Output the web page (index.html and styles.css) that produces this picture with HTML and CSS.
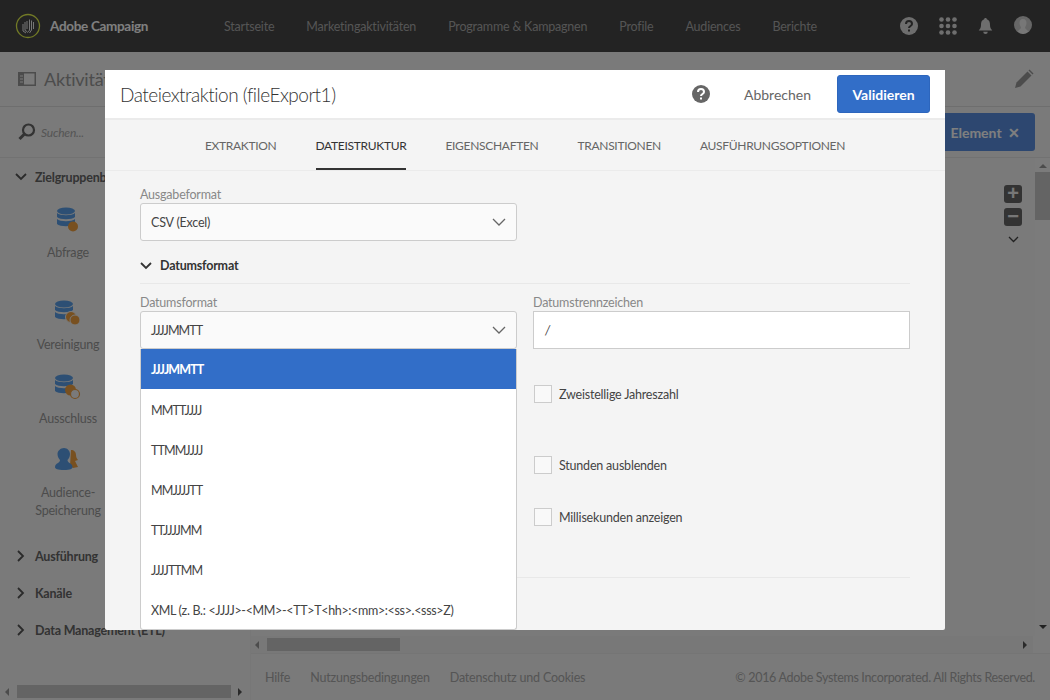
FILE: index.html
```html
<!DOCTYPE html>
<html lang="de">
<head>
<meta charset="utf-8">
<title>Adobe Campaign</title>
<link rel="stylesheet" href="styles.css">
</head>
<body>
<div class="app">
  <header class="topbar">
    <div class="brand">
      <svg class="logo" width="26" height="26" viewBox="0 0 26 26"><circle cx="13" cy="13" r="11.500" fill="none" stroke="#e4f44c" stroke-width="1.300"/><path d="M8 11v7l3 2M10 9v8.500l2 1M12 8v8M14.500 6.500v10.500c-.5 1.500-1.500 2-2.500 2.500M16.500 7.500v9.500l-2 3M18.500 9v7" fill="none" stroke="#eee" stroke-width="1"/></svg>
      <span class="brand-name">Adobe Campaign</span>
    </div>
    <nav class="nav">
      <span>Startseite</span><span>Marketingaktivitäten</span><span>Programme &amp; Kampagnen</span><span>Profile</span><span>Audiences</span><span>Berichte</span>
    </nav>
    <div class="top-icons">
      <svg width="18" height="18" viewBox="0 0 18 18"><circle cx="9" cy="9" r="9" fill="#ddd"/><path d="M6 7c0-4 6-4 6 0 0 2-3 2-3 4" fill="none" stroke="#464646" stroke-width="2"/><rect x="8" y="12.500" width="2" height="2" fill="#464646"/></svg>
      <svg width="18" height="18" viewBox="0 0 18 18" fill="#ddd"><circle cx="2.500" cy="2.500" r="2.300"/><circle cx="9" cy="2.500" r="2.300"/><circle cx="15.500" cy="2.500" r="2.300"/><circle cx="2.500" cy="9" r="2.300"/><circle cx="9" cy="9" r="2.300"/><circle cx="15.500" cy="9" r="2.300"/><circle cx="2.500" cy="15.500" r="2.300"/><circle cx="9" cy="15.500" r="2.300"/><circle cx="15.500" cy="15.500" r="2.300"/></svg>
      <svg width="15" height="18" viewBox="0 0 16 20" fill="#ddd"><path d="M8 1c-1 0-1.500.7-1.500 1.500C3.500 3.500 3 6 3 9c0 3-1 4.500-2.500 6h15C14 13.500 13 12 13 9c0-3-.5-5.500-3.500-6.500C9.500 1.700 9 1 8 1z"/><path d="M5.500 16.500a2.500 2.500 0 0 0 5 0z"/></svg>
      <svg class="avatar" width="18" height="18" viewBox="0 0 18 18"><circle cx="9" cy="9" r="9" fill="#ccc"/><path d="M9 3c2.500 0 3.500 2 3.500 4S11 11 11 12l3.500 3.500A9 9 0 0 1 9 18a9 9 0 0 1-5.500-2.500L7 12c0-1-1.500-3-1.500-5S6.500 3 9 3z" fill="#eee"/></svg>
    </div>
  </header>

  <div class="subbar">
    <svg class="panel-icon" width="18" height="14" viewBox="0 0 18 14"><rect x=".75" y=".75" width="16.500" height="12.500" fill="none" stroke="#999" stroke-width="1.500"/><rect x="1" y="1" width="5" height="12" fill="#999"/><path d="M2 4h3M2 7h3M2 10h3" stroke="#f4f4f4" stroke-width="1"/></svg>
    <span class="subbar-title">Aktivitäten</span>
    <svg class="pencil" width="20" height="20" viewBox="0 0 20 20"><path d="M1 19l1.500-5.500L13.500 2.500l4 4L6.500 17.500z" fill="#999"/><path d="M14.500 1.500l1-1 4 4-1 1z" fill="#999"/></svg>
  </div>

  <div class="workspace">
    <aside class="sidebar">
      <div class="search">
        <svg width="20" height="20" viewBox="0 0 20 20"><circle cx="11.500" cy="8" r="5.500" fill="none" stroke="#666" stroke-width="2.200"/><path d="M7.500 12L2.500 17" stroke="#666" stroke-width="3"/></svg>
        <span>Suchen...</span>
      </div>
      <div class="section section-open">
        <svg class="chev" width="12" height="8" viewBox="0 0 12 8"><path d="M1 1l5 5 5-5" fill="none" stroke="#555" stroke-width="1.800"/></svg>
        <span>Zielgruppenbestimmung</span>
      </div>
      <div class="tool tool-abfrage">
        <svg width="24" height="26" viewBox="0 0 24 26"><ellipse cx="10" cy="4" rx="9" ry="3.500" fill="#5a9fe8"/><path d="M1 6c3 3 15 3 18 0v4c-3 3-15 3-18 0zM1 12c3 3 15 3 18 0v5c-3 3-15 3-18 0z" fill="#5a9fe8"/><circle cx="17" cy="19.500" r="5" fill="#f0a040"/></svg>
        <span>Abfrage</span>
      </div>
      <div class="tool tool-union">
        <svg width="26" height="26" viewBox="0 0 26 26"><ellipse cx="9" cy="4" rx="9" ry="3.500" fill="#5a9fe8"/><path d="M0 6c3 3 15 3 18 0v4c-3 3-15 3-18 0zM0 12c3 3 15 3 18 0v5c-3 3-15 3-18 0z" fill="#5a9fe8"/><circle cx="16" cy="17" r="5.500" fill="#f0a040" stroke="#f4f4f4" stroke-width="1"/><circle cx="20" cy="20" r="5" fill="#f0a040" stroke="#f4f4f4" stroke-width="1"/></svg>
        <span>Vereinigung</span>
      </div>
      <div class="tool tool-excl">
        <svg width="26" height="26" viewBox="0 0 26 26"><ellipse cx="9" cy="4" rx="9" ry="3.500" fill="#5a9fe8"/><path d="M0 6c3 3 15 3 18 0v4c-3 3-15 3-18 0zM0 12c3 3 15 3 18 0v5c-3 3-15 3-18 0z" fill="#5a9fe8"/><circle cx="15.500" cy="16" r="5.500" fill="#f0a040"/><circle cx="20" cy="20" r="4.500" fill="#f4f4f4" stroke="#f0a040" stroke-width="1.200"/></svg>
        <span>Ausschluss</span>
      </div>
      <div class="tool tool-aud">
        <svg width="26" height="26" viewBox="0 0 26 26"><path d="M16 3c3 0 5 2 5 5 0 2 1 4 2 5l-3 1 3 6-5 1-3-2z" fill="#f0a040"/><path d="M9 1c3.500 0 6 3 6 6 0 3-1.500 5-2.500 6 0 1 .5 2 2 3 2 1 3 2 3 4 0 2-2 3-8.500 3S0 22 0 20c0-2 1-3 3-4 1.500-1 2-2 2-3-1-1-2.500-3-2.500-6 0-3 3-6 6.500-6z" fill="#5a9fe8"/></svg>
        <span>Audience-<br>Speicherung</span>
      </div>
      <div class="section section-run"><svg width="8" height="12" viewBox="0 0 8 12"><path d="M1 1l5 5-5 5" fill="none" stroke="#555" stroke-width="1.800"/></svg><span>Ausführung</span></div>
      <div class="section section-closed"><svg width="8" height="12" viewBox="0 0 8 12"><path d="M1 1l5 5-5 5" fill="none" stroke="#555" stroke-width="1.800"/></svg><span>Kanäle</span></div>
      <div class="section section-closed"><svg width="8" height="12" viewBox="0 0 8 12"><path d="M1 1l5 5-5 5" fill="none" stroke="#555" stroke-width="1.800"/></svg><span>Data Management (ETL)</span></div>
      <div class="side-scroll"><i class="arrow-l"></i><b></b><i class="arrow-r"></i></div>
    </aside>

    <main class="canvas">
      <div class="toolbar">
        <button class="element-btn" type="button">Element <span>✕</span></button>
      </div>
      <div class="stage">
        <div class="stage-main">
          <div class="zoom-tools">
            <span class="zoom-btn">+</span>
            <span class="zoom-btn">−</span>
            <svg width="11" height="7" viewBox="0 0 11 7"><path d="M1 1l4.500 4.500L10 1" fill="none" stroke="#444" stroke-width="1.300"/></svg>
          </div>
        </div>
        <div class="v-scroll"><i class="arrow-u"></i><b></b><i class="arrow-d"></i></div>
      </div>
      <div class="h-scroll"><i class="arrow-l"></i><b></b><i class="arrow-r"></i><em></em></div>
      <footer class="footer">
        <span>Hilfe</span><span>Nutzungsbedingungen</span><span>Datenschutz und Cookies</span>
        <span class="copyright">© 2016 Adobe Systems Incorporated. All Rights Reserved.</span>
      </footer>
    </main>
  </div>
</div>

<div class="overlay"></div>

<section class="modal">
  <div class="modal-head">
    <h1>Dateiextraktion (fileExport1)</h1>
    <svg class="help" width="18" height="18" viewBox="0 0 18 18"><circle cx="9" cy="9" r="9" fill="#666"/><path d="M6 7c0-4 6-4 6 0 0 2-3 2-3 4" fill="none" stroke="#fff" stroke-width="2"/><rect x="8" y="12.500" width="2" height="2" fill="#fff"/></svg>
    <span class="cancel">Abbrechen</span>
    <button class="validate" type="button">Validieren</button>
  </div>
  <div class="tabs">
    <span>EXTRAKTION</span><span class="tab-active">DATEISTRUKTUR</span><span>EIGENSCHAFTEN</span><span>TRANSITIONEN</span><span>AUSFÜHRUNGSOPTIONEN</span>
  </div>
  <div class="modal-body">
    <div class="field field-half">
      <label>Ausgabeformat</label>
      <div class="select">CSV (Excel)<svg width="14" height="8" viewBox="0 0 14 8"><path d="M1 1l6 6 6-6" fill="none" stroke="#666" stroke-width="1.300"/></svg></div>
    </div>
    <div class="group-head">
      <svg width="12" height="8" viewBox="0 0 12 8"><path d="M1 1l5 5 5-5" fill="none" stroke="#333" stroke-width="1.800"/></svg>
      <span>Datumsformat</span>
    </div>
    <div class="columns">
      <div class="col">
        <div class="field">
          <label>Datumsformat</label>
          <div class="select"><span class="tight">JJJJMMTT</span><svg width="14" height="8" viewBox="0 0 14 8"><path d="M1 1l6 6 6-6" fill="none" stroke="#666" stroke-width="1.300"/></svg></div>
          <ul class="dropdown">
            <li class="selected tight">JJJJMMTT</li>
            <li class="tight">MMTTJJJJ</li>
            <li class="tight">TTMMJJJJ</li>
            <li class="tight">MMJJJJTT</li>
            <li class="tight">TTJJJJMM</li>
            <li class="tight">JJJJTTMM</li>
            <li>XML (z. B.: &lt;JJJJ&gt;-&lt;MM&gt;-&lt;TT&gt;T&lt;hh&gt;:&lt;mm&gt;:&lt;ss&gt;.&lt;sss&gt;Z)</li>
          </ul>
        </div>
      </div>
      <div class="col">
        <div class="field">
          <label>Datumstrennzeichen</label>
          <div class="input">/</div>
        </div>
        <div class="check check-a"><i></i><span>Zweistellige Jahreszahl</span></div>
        <div class="check check-b"><i></i><span>Stunden ausblenden</span></div>
        <div class="check check-c"><i></i><span>Millisekunden anzeigen</span></div>
      </div>
    </div>
    <hr class="rule">
  </div>
</section>
</body>
</html>
```
FILE: styles.css
```css
* { box-sizing: border-box; }
html, body { margin: 0; height: 700px; overflow: hidden; }
body { font-family: "Lato", "Open Sans", sans-serif; font-size: 12.500px; letter-spacing: -0.2px; font-variant-ligatures: none; color: #333; position: relative; background: #f4f4f4; }

.app { display: flex; flex-direction: column; height: 700px; width: 1050px; }

.topbar { height: 52px; flex: none; background: #464646; display: flex; align-items: center; padding-left: 15px; color: #aaa; }
.brand { display: flex; align-items: center; gap: 9px; width: 209px; flex: none; }
.brand-name { font-size: 13.500px; font-weight: 700; letter-spacing: -0.32px; color: #fff; }
.nav { display: flex; gap: 32px; }
.top-icons { margin-left: auto; margin-right: 18px; display: flex; align-items: center; gap: 21px; }
.avatar { margin-top: -2px; }

.subbar { height: 55px; flex: none; display: flex; align-items: center; padding: 0 16px 0 18px; border-bottom: 1px solid #ddd; background: #f4f4f4; }
.subbar-title { font-size: 18px; margin-left: 8px; color: #999; }
.pencil { margin-left: auto; }

.workspace { flex: 1; display: flex; min-height: 0; }

.sidebar { width: 250px; flex: none; position: relative; background: #f4f4f4; }
.search { height: 51px; display: flex; align-items: center; gap: 4px; padding-left: 17px; font-style: italic; font-size: 12px; color: #aaa; border-bottom: 1px solid #e4e4e4; }
.section { display: flex; align-items: center; gap: 10px; padding-left: 17px; font-weight: 700; color: #666; height: 20px; }
.section-open { margin-top: 9px; gap: 8px; padding-left: 15px; }
.section-run { margin-top: 19px; }
.section-closed { margin-top: 17px; }
.tool { width: 136px; display: flex; flex-direction: column; align-items: center; text-align: center; color: #999; line-height: 18px; }
.tool span { margin-top: 10px; }
.tool-abfrage span, .tool-aud span { margin-top: 11px; }
.tool-abfrage { margin-top: 20px; height: 93px; }
.tool-union { height: 74px; }
.tool-excl { height: 73px; }
.tool-aud { height: 80px; }
.side-scroll { position: absolute; left: 0; right: 0; bottom: 2px; height: 13px; padding: 0 5px; display: flex; align-items: center; }
.side-scroll b { display: block; width: 214px; height: 13px; margin-left: 8px; background: #c8c8c8; }
.side-scroll .arrow-r { margin-left: 7px; }

.arrow-l, .arrow-r, .arrow-u, .arrow-d { display: block; width: 0; height: 0; border: 4px solid transparent; flex: none; }
.arrow-l { border-right-color: #999; border-left-width: 0; }
.arrow-r { border-left-color: #555; border-right-width: 0; }
.arrow-u { border-bottom-color: #999; border-top-width: 0; }
.arrow-d { border-top-color: #444; border-bottom-width: 0; }

.canvas { flex: 1; display: flex; flex-direction: column; min-width: 0; background: #f4f4f4; border-left: 1px solid #efefef; }
.toolbar { height: 51px; flex: none; display: flex; justify-content: flex-end; align-items: center; padding-right: 15px; border-bottom: 1px solid #e4e4e4; }
.element-btn { width: 120px; height: 38px; border: 0; border-radius: 3px; background: #5a8fe0; color: #fff; font: 700 14px "Lato", sans-serif; text-align: right; padding: 0 15px 0 0; }
.element-btn span { margin-left: 3px; }
.stage { flex: 1; display: flex; min-height: 0; }
.stage-main { flex: 1; position: relative; }
.zoom-tools { position: absolute; top: 27px; right: 13px; display: flex; flex-direction: column; align-items: center; gap: 5px; }
.zoom-tools svg { margin-top: 5px; }
.zoom-btn { width: 18px; height: 18px; border-radius: 3px; background: #666; color: #eee; font: 700 20px/17px "Liberation Sans", sans-serif; text-align: center; display: block; }
.v-scroll { width: 15px; flex: none; display: flex; flex-direction: column; align-items: center; padding-top: 6px; background: #f7f7f7; }
.v-scroll b { display: block; width: 15px; height: 48px; margin-top: 4px; background: #c8c8c8; }
.v-scroll .arrow-d { margin-top: auto; margin-bottom: 7px; }
.h-scroll { height: 18px; flex: none; display: flex; align-items: center; padding-left: 4px; border-bottom: 1px solid #eaeaea; background: #f0f0f0; }
.h-scroll b { display: block; width: 133px; height: 13px; margin-left: 8px; background: #c8c8c8; }
.h-scroll .arrow-r { margin-left: auto; }
.h-scroll em { display: block; width: 17px; height: 17px; margin-left: 6px; background: #f7f7f7; }
.footer { height: 46px; flex: none; display: flex; align-items: center; gap: 20px; padding: 1px 15px 0 14px; color: #aaa; }
.copyright { margin-left: auto; letter-spacing: -0.32px; }

.overlay { position: absolute; inset: 0; background: rgba(0, 0, 0, 0.5); }

.modal { position: absolute; left: 105px; top: 70px; width: 840px; height: 560px; background: #f4f4f4; border-radius: 2px; }
.modal-head { height: 50px; background: #fff; display: flex; align-items: center; padding: 0 15px; border-bottom: 2px solid #ebebeb; }
.modal-head h1 { margin: 0; font-size: 19px; font-weight: 300; letter-spacing: -0.5px; color: #333; }
.help { margin-left: auto; }
.cancel { font-size: 14px; letter-spacing: 0; color: #666; margin-left: 34px; }
.validate { width: 93px; height: 38px; margin-left: 26px; border: 1px solid #2d66bd; border-radius: 3px; background: #326ec8; color: #fff; font: 700 14px "Lato", sans-serif; padding: 0; }

.tabs { height: 51px; display: flex; justify-content: center; gap: 39px; border-bottom: 1px solid #ebebeb; font-size: 12px; letter-spacing: -0.3px; color: #666; }
.tabs span { display: flex; align-items: center; height: 50px; }
.tabs .tab-active { color: #333; border-bottom: 2px solid #333; padding-top: 2px; }

.modal-body { padding: 15px 35px 0; }
.field label { display: block; height: 17px; color: #888; line-height: 17px; }
.field-half { width: 377px; }
.select { position: relative; height: 38px; display: flex; align-items: center; justify-content: space-between; padding: 0 10px; background: #fafafa; border: 1px solid #ccc; border-radius: 3px; color: #444; }
.input { height: 38px; display: flex; align-items: center; padding: 0 11px; background: #fff; border: 1px solid #ccc; font-style: italic; color: #444; }
.group-head { display: flex; align-items: center; gap: 8px; height: 43px; padding-top: 7px; border-bottom: 1px solid #e8e8e8; font-weight: 700; color: #333; }
.columns { display: grid; grid-template-columns: 377px 377px; gap: 16px; margin-top: 10px; height: 283px; }
.col .field { position: relative; }
.dropdown { position: absolute; left: 0; top: 55px; width: 377px; margin: 0; padding: 0; list-style: none; background: #fff; border: 1px solid #ccc; border-top: 0; border-radius: 0 0 3px 3px; z-index: 1; letter-spacing: -0.34px; }
.dropdown li { height: 40px; display: flex; align-items: center; padding: 2px 0 0 10px; color: #444; white-space: nowrap; }
.dropdown .selected { background: #326ec8; color: #fff; font-weight: 700; padding-top: 0; }
.dropdown .tight, .tight { letter-spacing: -0.9px; }
.check { display: flex; align-items: center; gap: 7px; color: #444; }
.check i { width: 18px; height: 18px; border: 1px solid #ccc; background: #f9f9f9; margin-left: 1px; display: block; flex: none; }
.check-a { margin-top: 36px; }
.check-b { margin-top: 53px; }
.check-c { margin-top: 34px; }
.rule { margin: 0; border: 0; border-top: 1px solid #e8e8e8; }
```
